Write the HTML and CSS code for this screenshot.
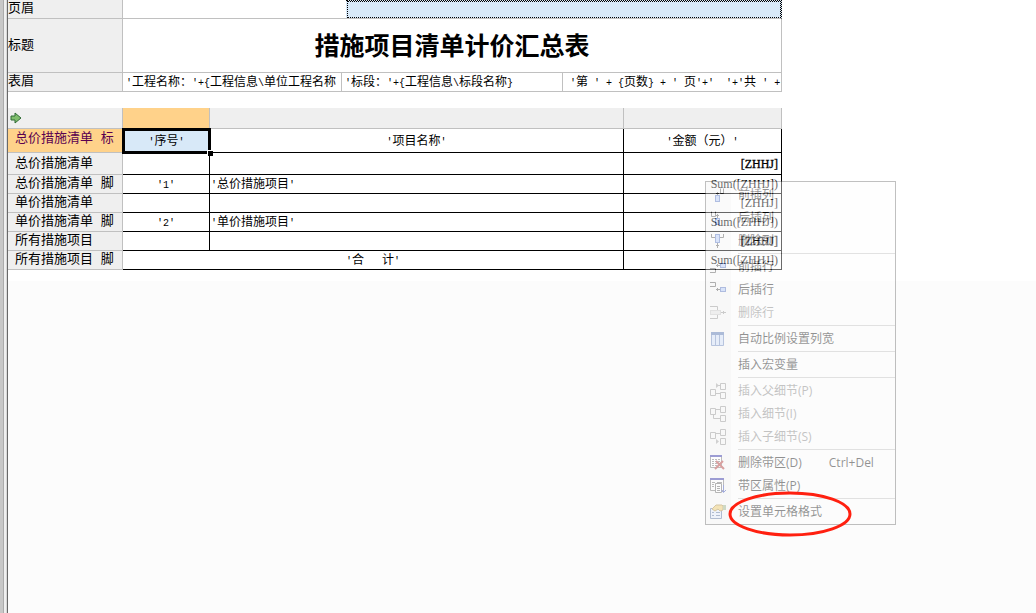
FILE: index.html
```html
<!DOCTYPE html>
<html lang="zh-CN">
<head>
<meta charset="utf-8">
<title>措施项目清单计价汇总表</title>
<link rel="stylesheet" href="styles.css">
</head>
<body>
<div class="rail"></div>
<main class="workspace">
  <section class="sheet">
    <table class="grid page-grid">
      <colgroup><col class="c-label"><col class="c-left"><col class="c-tiny"><col class="c-mid"><col class="c-right"></colgroup>
      <tr class="r-head"><th scope="row">页眉</th><td class="open" colspan="2"></td><td class="picked" colspan="2"></td></tr>
      <tr class="r-title"><th scope="row">标题</th><td class="title" colspan="4">措施项目清单计价汇总表</td></tr>
      <tr class="r-caption"><th scope="row">表眉</th>
        <td><i>'</i>工程名称：<i>'+{</i>工程信息<i>\</i>单位工程名称</td>
        <td colspan="2"><i>'</i>标段：<i>'+{</i>工程信息<i>\</i>标段名称<i>}</i></td>
        <td class="pages"><i>'</i>第<i> ' + {</i>页数<i>} + ' </i>页<i>'+'  '+'</i>共<i> ' +</i></td></tr>
    </table>
    <table class="grid band-grid">
      <colgroup><col class="c-label"><col class="c-no"><col class="c-name"><col class="c-sum"></colgroup>
      <tr class="r-cols">
        <th><svg class="arrow" width="12" height="12" viewBox="0 0 12 12"><path d="M1 4h4V1l6 5-6 5V8H1z" fill="#7fbd6c" stroke="#2f6b35"/></svg></th>
        <th class="active"></th><th></th><th></th></tr>
      <tr class="r-first"><th class="active" scope="row">总价措施清单 标</th><td class="cell-on"><i>'</i>序号<i>'</i><span class="handle"></span></td><td class="mid"><i>'</i>项目名称<i>'</i></td><td class="mid"><i>'</i>金额（元）<i>'</i></td></tr>
      <tr class="r-second"><th scope="row">总价措施清单</th><td></td><td></td><td class="num strong">[ZHHJ]</td></tr>
      <tr><th scope="row">总价措施清单 脚</th><td class="mid"><i>'1'</i></td><td><i>'</i>总价措施项目<i>'</i></td><td class="num">Sum([ZHHJ])</td></tr>
      <tr><th scope="row">单价措施清单</th><td></td><td></td><td class="num">[ZHHJ]</td></tr>
      <tr><th scope="row">单价措施清单 脚</th><td class="mid"><i>'2'</i></td><td><i>'</i>单价措施项目<i>'</i></td><td class="num">Sum([ZHHJ])</td></tr>
      <tr><th scope="row">所有措施项目</th><td></td><td></td><td class="num strong">[ZHHJ]</td></tr>
      <tr><th scope="row">所有措施项目 脚</th><td class="mid" colspan="2"><i>'</i>合<i>   </i>计<i>'</i></td><td class="num">Sum([ZHHJ])</td></tr>
    </table>
  </section>

  <menu class="menu">
    <li><button><svg viewBox="0 0 16 16"><path d="M10.500 1.500V6.500H13.500V1.500M7.500 5V9M6 6.500H9" class="ln"/><rect x="5.500" y="8.500" width="4" height="6" class="bx"/></svg>前插列</button></li>
    <li><button><svg viewBox="0 0 16 16"><path d="M1.500 1.500V6.500H5.500V1.500M7.500 4V9M6 5.500H9" class="ln"/><rect x="5.500" y="8.500" width="4" height="6" class="bx"/></svg>后插列</button></li>
    <li><button><svg viewBox="0 0 16 16"><path d="M1.500 1V4.500H5M13.500 1V4.500H10M7.500 9V15M6 12.500H9" class="ln"/><rect x="5.500" y="1.500" width="4" height="8" class="bx"/></svg>删除列</button></li>
    <li class="sep"></li>
    <li><button><svg viewBox="0 0 16 16"><path d="M0 9.500H5.500V13.500H0M6 6.500H10M7.500 5V8" class="ln"/><rect x="10.500" y="4.500" width="5" height="4" class="bx"/></svg>前插行</button></li>
    <li><button><svg viewBox="0 0 16 16"><path d="M0 .5H5.500V4.500H0M6 7.500H10M7.500 6V9" class="ln"/><rect x="10.500" y="5.500" width="5" height="4" class="bx"/></svg>后插行</button></li>
    <li><button disabled><svg viewBox="0 0 16 16"><path d="M0 1.500H7.500V5M0 13.500H7.500V10M10 7.500H16M13.500 6V9" class="ln"/><rect x=".5" y="5.500" width="10" height="4" fill="#ccc" stroke="#999"/></svg>删除行</button></li>
    <li class="sep"></li>
    <li><button><svg viewBox="0 0 16 16"><path d="M1.500 2.500H13.500V14.500H1.500zM5.500 2V14M9.500 2V14" fill="#c9d9f7" stroke="#5a78b5"/><path d="M1 2.500H14" stroke="#3f62a8" stroke-width="3"/></svg>自动比例设置列宽</button></li>
    <li class="sep"></li>
    <li><button class="plain">插入宏变量</button></li>
    <li class="sep"></li>
    <li><button disabled><svg viewBox="0 0 16 16"><path d="M.5 6.500H5.500V12.500H.5zM10.500 .5H15.500V6.500H10.500zM10.500 9.500H15.500V15.500H10.500zM6 10.500H10M8 2.500H10" class="ln"/><path d="M6 0L9 2.500 6 5z" fill="#555"/></svg>插入父细节(P)</button></li>
    <li><button disabled><svg viewBox="0 0 16 16"><path d="M.5 2.500H5.500V8.500H.5zM10.500 .5H15.500V6.500H10.500zM10.500 9.500H15.500V15.500H10.500zM6 3.500H10M3.500 9V12.500H10" class="ln"/></svg>插入细节(I)</button></li>
    <li><button disabled><svg viewBox="0 0 16 16"><path d="M.5 3.500H5.500V9.500H.5zM10.500 .5H15.500V6.500H10.500zM10.500 9.500H15.500V15.500H10.500zM6 4.500H10" class="ln"/><path d="M6 10L9 12.500 6 15z" fill="#555"/></svg>插入子细节(S)</button></li>
    <li class="sep"></li>
    <li><button><svg viewBox="0 0 16 16"><path d="M.5 1.500H11.500V12.500H.5z" fill="#fff" stroke="#666"/><path d="M0 1H12" stroke="#1a1a9c" stroke-width="2"/><path d="M2 4.500H10M2 6.500H10M2 8.500H10M2 10.500H10" stroke="#666" stroke-dasharray="2 1"/><path d="M6 6L14 14M13 6L5 14" stroke="#a82020" stroke-width="2"/></svg>删除带区(D)<kbd>Ctrl+Del</kbd></button></li>
    <li><button><svg viewBox="0 0 16 16"><path d="M.5 1.500H13.500V12.500H.5z" fill="#fff" stroke="#666"/><path d="M0 1H14" stroke="#1a1a9c" stroke-width="2"/><path d="M2 4.500H5M7 4.500H12M2 6.500H4M2 8.500H4" stroke="#666"/><path d="M5.500 5.500H11.500V14.500H5.500z" fill="#fff" stroke="#555"/><path d="M7 8.500H10M7 10.500H10M7 12.500H10" stroke="#555"/><path d="M13.500 7V14M11 12L13.500 14.500 16 12" stroke="#2a3fb0" fill="none"/></svg>带区属性(P)</button></li>
    <li class="sep"></li>
    <li><button><svg viewBox="0 0 16 16"><path d="M.5 4.500H11.500V14.500H.5z" fill="#dbe6fb" stroke="#4b6598"/><path d="M2 8.500H4M2 11.500H4M6 8.500H10M6 11.500H10" stroke="#4b6598"/><path d="M2 5L6 1H12L13 2V6L10 7 8 5 5 7z" fill="#e8c35a" stroke="#a07c28"/><path d="M13 1H16V6H13z" fill="#8fa878"/></svg>设置单元格格式</button></li>
  </menu>
  <svg class="ring" viewBox="0 0 124 46"><ellipse cx="62" cy="23" rx="60" ry="21"/></svg>
</main>
</body>
</html>
```
FILE: styles.css
```css
* { box-sizing: border-box; }
body {
  margin: 0;
  min-height: 100vh;
  display: flex;
  background: #fcfcfc;
  color: #000;
  font: 12px/16px "Noto Sans CJK SC", sans-serif;
  overflow: hidden;
}
.rail {
  flex: none;
  width: 8px;
  background: linear-gradient(90deg, #c8c8c8 0 3px, #ababab 3px 4px, #f0f0f0 4px 6px, #d8d8d8 6px 7px, #696969 7px);
}
.workspace { position: relative; flex: 1; }
.sheet { background: #fff; padding-bottom: 11px; }
.grid { table-layout: fixed; border-collapse: separate; border-spacing: 0; width: 774px; }
.grid th, .grid td {
  padding: 0;
  height: 19px;
  line-height: 14px;
  white-space: pre;
  overflow: hidden;
  text-align: left;
  font-weight: 400;
  border: solid #c0c0c0;
  border-width: 0 1px 1px 0;
}
.grid th { background: #efefef; font-size: 13px; font-family: "Liberation Mono", "Noto Sans CJK SC", monospace; }
.grid i { font: 10px/12px "Liberation Mono", monospace; }
.c-label { width: 115px; }
.c-left { width: 219px; }
.c-tiny { width: 4px; }
.c-mid { width: 217px; }
.c-right { width: 219px; }
.page-grid td { padding-left: 3px; }
.page-grid .open { border-right: 0; }
.page-grid .picked { background: #d8e9f8; border-right: 1px dotted #000; border-top: 1px dotted #000; outline: 1px dotted #000; outline-offset: -2px; }
.grid .r-title > * { height: 54px; }
.page-grid .title { font-size: 25px; line-height: 32px; font-weight: 700; text-align: center; padding: 0 0 4px; }
.page-grid .pages { padding-left: 7px; }

.band-grid { margin-top: 16px; }
.c-no { width: 87px; }
.c-name { width: 414px; }
.c-sum { width: 158px; }
.band-grid th { padding-left: 7px; }
.grid .r-cols > * { height: 21px; padding-left: 2px; }
.arrow { display: block; }
.grid th.active { background: #ffd28a; color: #5a0050; }
.grid .r-first > * { height: 24px; }
.grid .r-first th { padding-bottom: 4px; }
.grid .r-second > * { height: 22px; }
.band-grid td { border-color: #000; padding-left: 1px; }
.band-grid .mid { text-align: center; padding: 0; }
.band-grid .num { text-align: right; padding-right: 3px; font-family: "Liberation Serif", serif; }
.band-grid .strong { -webkit-text-stroke: 0.3px #000; }
.band-grid .cell-on { position: relative; overflow: visible; text-align: center; background: #d8e9f8; outline: 3px solid #000; outline-offset: -2px; border-color: #000; }
.handle { position: absolute; right: -4px; bottom: -4px; width: 6px; height: 6px; background: #000; border: solid #fff; border-width: 1px 0 0 1px; }

.menu {
  position: absolute;
  left: 697px;
  top: 181px;
  width: 191px;
  margin: 0;
  padding: 1px 0;
  list-style: none;
  border: 1px solid #6a6a6a;
  background: linear-gradient(90deg, #f4f4f4 25px, #fdfdfd 25px);
  opacity: 0.42;
}
.menu button {
  display: flex;
  align-items: center;
  width: 100%;
  height: 23px;
  padding: 0 0 0 4px;
  border: 0;
  background: none;
  color: #000;
  font: 12px/16px "Open Sans", "Noto Sans CJK SC", sans-serif;
  text-align: left;
}
.menu .plain { padding-left: 32px; }
.menu button:disabled { color: #777; }
.menu svg { width: 16px; height: 16px; margin-right: 12px; }
.menu button:disabled svg { opacity: 0.6; }
.menu kbd { font: inherit; margin-left: 27px; }
.sep { height: 3px; margin-left: 32px; padding-top: 1px; }
.sep::before { content: ""; display: block; height: 1px; background: #bcbcbc; }
.ln { fill: none; stroke: #444; }
.bx { fill: #a9c1f5; stroke: #4666b8; }
.ring { position: absolute; left: 720px; top: 491px; width: 124px; height: 46px; pointer-events: none; }
.ring ellipse { fill: none; stroke: #ff2010; stroke-width: 3; }
```
